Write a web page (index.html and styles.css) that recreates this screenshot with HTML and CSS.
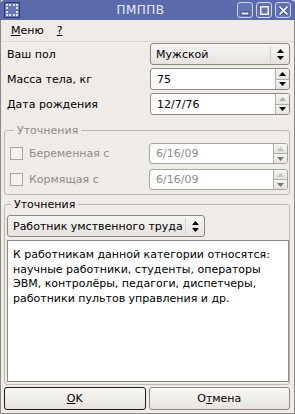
FILE: index.html
```html
<!DOCTYPE html>
<html lang="ru">
<head>
  <meta charset="UTF-8" />
  <title>ПМППВ</title>
  <link rel="stylesheet" href="styles.css">
</head>
<body>
  <div class="window">
    <div class="titlebar">
      <span class="win-icon"><span class="win-icon-inner"></span></span>
      <span class="title">ПМППВ</span>
      <div class="win-buttons">
        <span class="wbtn">
          <svg width="11" height="11" viewBox="0 0 11 11"><rect x="1" y="7" width="8" height="3" fill="#eef0f8" stroke="#34407a" stroke-width="1"/></svg>
        </span>
        <span class="wbtn">
          <svg width="11" height="11" viewBox="0 0 11 11"><rect x="1.5" y="1.5" width="8" height="8" fill="none" stroke="#eef0f8" stroke-width="2"/><rect x="0.5" y="0.5" width="10" height="10" fill="none" stroke="#34407a" stroke-width="0.6"/></svg>
        </span>
        <span class="wbtn">
          <svg width="11" height="11" viewBox="0 0 11 11"><path d="M1.5 1.5 L9.5 9.5 M9.5 1.5 L1.5 9.5" stroke="#34407a" stroke-width="3.4"/><path d="M1.5 1.5 L9.5 9.5 M9.5 1.5 L1.5 9.5" stroke="#eef0f8" stroke-width="1.8"/></svg>
        </span>
      </div>
    </div>

    <div class="menubar">
      <span class="menu-item"><u>М</u>еню</span>
      <span class="menu-item"><u>?</u></span>
    </div>

    <div class="content">
      <div class="row">
        <span class="label">Ваш пол</span>
        <div class="combo field">
          <span class="combo-text">Мужской</span>
          <span class="combo-arrow">
            <svg width="7" height="11" viewBox="0 0 7 11"><path d="M0 4 L3.5 0 L7 4 Z M0 7 L7 7 L3.5 11 Z" fill="#000"/></svg>
          </span>
        </div>
      </div>

      <div class="row">
        <span class="label">Масса тела, кг</span>
        <div class="spin field">
          <span class="spin-text">75</span>
          <span class="spin-buttons">
            <span class="spin-btn"><svg width="7" height="4" viewBox="0 0 7 4"><path d="M0 4 L3.5 0 L7 4 Z" fill="#000"/></svg></span>
            <span class="spin-btn"><svg width="7" height="4" viewBox="0 0 7 4"><path d="M0 0 L7 0 L3.5 4 Z" fill="#000"/></svg></span>
          </span>
        </div>
      </div>

      <div class="row">
        <span class="label">Дата рождения</span>
        <div class="spin field">
          <span class="spin-text">12/7/76</span>
          <span class="spin-buttons">
            <span class="spin-btn"><svg width="7" height="4" viewBox="0 0 7 4"><path d="M0 4 L3.5 0 L7 4 Z" fill="#b4b1ad"/></svg></span>
            <span class="spin-btn"><svg width="7" height="4" viewBox="0 0 7 4"><path d="M0 0 L7 0 L3.5 4 Z" fill="#000"/></svg></span>
          </span>
        </div>
      </div>

      <div class="group group-disabled">
        <span class="group-title">Уточнения</span>
        <div class="check-row">
          <span class="check"><span class="check-box"></span>Беременная с</span>
          <div class="spin field">
            <span class="spin-text">6/16/09</span>
            <span class="spin-buttons">
              <span class="spin-btn"><svg width="7" height="4" viewBox="0 0 7 4"><path d="M0 4 L3.5 0 L7 4 Z" fill="#c4c1bd"/></svg></span>
              <span class="spin-btn"><svg width="7" height="4" viewBox="0 0 7 4"><path d="M0 0 L7 0 L3.5 4 Z" fill="#77746f"/></svg></span>
            </span>
          </div>
        </div>
        <div class="check-row">
          <span class="check"><span class="check-box"></span>Кормящая с</span>
          <div class="spin field">
            <span class="spin-text">6/16/09</span>
            <span class="spin-buttons">
              <span class="spin-btn"><svg width="7" height="4" viewBox="0 0 7 4"><path d="M0 4 L3.5 0 L7 4 Z" fill="#c4c1bd"/></svg></span>
              <span class="spin-btn"><svg width="7" height="4" viewBox="0 0 7 4"><path d="M0 0 L7 0 L3.5 4 Z" fill="#77746f"/></svg></span>
            </span>
          </div>
        </div>
      </div>

      <div class="group group-main">
        <span class="group-title">Уточнения</span>
        <div class="combo combo-small">
          <span class="combo-text">Работник умственного труда</span>
          <span class="combo-arrow">
            <svg width="7" height="11" viewBox="0 0 7 11"><path d="M0 4 L3.5 0 L7 4 Z M0 7 L7 7 L3.5 11 Z" fill="#000"/></svg>
          </span>
        </div>
        <div class="textarea">К работникам данной категории относятся: научные работники, студенты, операторы ЭВМ, контролёры, педагоги, диспетчеры, работники пультов управления и др.</div>
      </div>

      <div class="buttons">
        <button type="button" class="button button-default"><u>O</u>K</button>
        <button type="button" class="button">О<u>т</u>мена</button>
      </div>
    </div>
  </div>
</body>
</html>
```

FILE: styles.css
```css
* {
  box-sizing: border-box;
}
body {
  margin: 0;
  padding: 0;
  font-family: 'DejaVu Sans', Verdana, sans-serif;
  font-size: 11px;
  color: #000;
  background-color: #efebe7;
}
.window {
  width: 295px;
  height: 414px;
  display: flex;
  flex-direction: column;
  background-color: #efebe7;
  border: 1px solid #8c8985;
  border-top: none;
}
.titlebar {
  height: 20px;
  flex-shrink: 0;
  margin: 0 -1px;
  display: flex;
  align-items: center;
  padding: 0 4px;
  background-color: #5b6aab;
  border-radius: 5px 5px 0 0;
  color: #e9ecf6;
}
.win-icon {
  width: 16px;
  height: 16px;
  border: 1px solid #2f3b72;
  background-color: #6977b6;
  display: flex;
  align-items: center;
  justify-content: center;
}
.win-icon-inner {
  width: 12px;
  height: 12px;
  border: 2px dotted #dfe3f2;
}
.title {
  flex: 1;
  text-align: center;
  padding-left: 24px;
  font-size: 12px;
  letter-spacing: 0.5px;
}
.win-buttons {
  display: flex;
  gap: 3px;
}
.wbtn {
  width: 16px;
  height: 16px;
  border: 1px solid #cfd4ea;
  border-radius: 3px;
  background-color: #6473b3;
  display: flex;
  align-items: center;
  justify-content: center;
}
.menubar {
  height: 22px;
  flex-shrink: 0;
  display: flex;
  align-items: center;
  gap: 13px;
  padding-left: 10px;
  border-bottom: 1px solid #dcd8d2;
}
.content {
  flex: 1;
  display: flex;
  flex-direction: column;
  padding: 1px 4px 3px 3px;
}
.row {
  height: 22px;
  flex-shrink: 0;
  display: flex;
  align-items: center;
  margin-bottom: 3px;
}
.label {
  width: 146px;
  padding-left: 3px;
}
.field {
  flex: 1;
  height: 22px;
}
.combo {
  display: flex;
  align-items: center;
  border: 1px solid #8d8984;
  border-radius: 3px;
  background: linear-gradient(#f7f6f4, #e6e3de);
}
.combo-text {
  flex: 1;
  padding-left: 5px;
  white-space: nowrap;
}
.combo-arrow {
  width: 19px;
  height: 16px;
  border-left: 1px solid #d4d0ca;
  display: flex;
  align-items: center;
  justify-content: center;
}
.spin {
  display: flex;
  border: 1px solid #8d8984;
  border-radius: 3px;
  background-color: #fff;
  overflow: hidden;
}
.spin-text {
  flex: 1;
  padding-left: 6px;
  align-self: center;
}
.spin-buttons {
  width: 14px;
  display: flex;
  flex-direction: column;
  border-left: 1px solid #b1ada7;
}
.spin-btn {
  flex: 1;
  display: flex;
  align-items: center;
  justify-content: center;
  background: linear-gradient(#f6f5f3, #e5e2dd);
}
.spin-btn + .spin-btn {
  border-top: 1px solid #b1ada7;
}
.group {
  display: flex;
  flex-direction: column;
  flex-shrink: 0;
  border: 1px solid #bcb8b1;
  border-radius: 3px;
}
.group-title {
  align-self: flex-start;
  height: 13px;
  line-height: 13px;
  margin: -7px 0 0 4px;
  padding: 0 3px;
  background-color: #efebe7;
}
.group-disabled {
  margin-top: 12px;
  padding: 0 1px 4px 5px;
  color: #8e8b87;
}
.group-disabled .spin {
  border-color: #a7a39e;
}
.check-row {
  display: flex;
  align-items: center;
  height: 21px;
  margin-top: 5px;
}
.group-title + .check-row {
  margin-top: 6px;
}
.check {
  width: 139px;
  display: flex;
  align-items: center;
  gap: 6px;
}
.check-box {
  width: 13px;
  height: 13px;
  border: 1px solid #a9a6a1;
  background-color: #f4f2ef;
}
.check-row .field {
  height: 21px;
}
.group-main {
  flex: 1;
  margin-top: 9px;
  padding: 0 0 2px 2px;
}
.combo-small {
  width: 198px;
  height: 22px;
  margin-top: 4px;
  margin-bottom: 3px;
}
.textarea {
  flex: 1;
  background-color: #fff;
  border: 1px solid #8d8984;
  padding: 7px 5px;
  line-height: 14.5px;
}
.buttons {
  display: flex;
  flex-shrink: 0;
  gap: 3px;
  margin-top: 2px;
}
.button {
  flex: 1;
  height: 23px;
  font-family: 'DejaVu Sans', Verdana, sans-serif;
  font-size: 11px;
  color: #000;
  border: 1px solid #8d8984;
  border-radius: 3px;
  background: linear-gradient(#f8f7f5, #e7e4df);
}
.button-default {
  border-color: #1e1d1b;
}
```
